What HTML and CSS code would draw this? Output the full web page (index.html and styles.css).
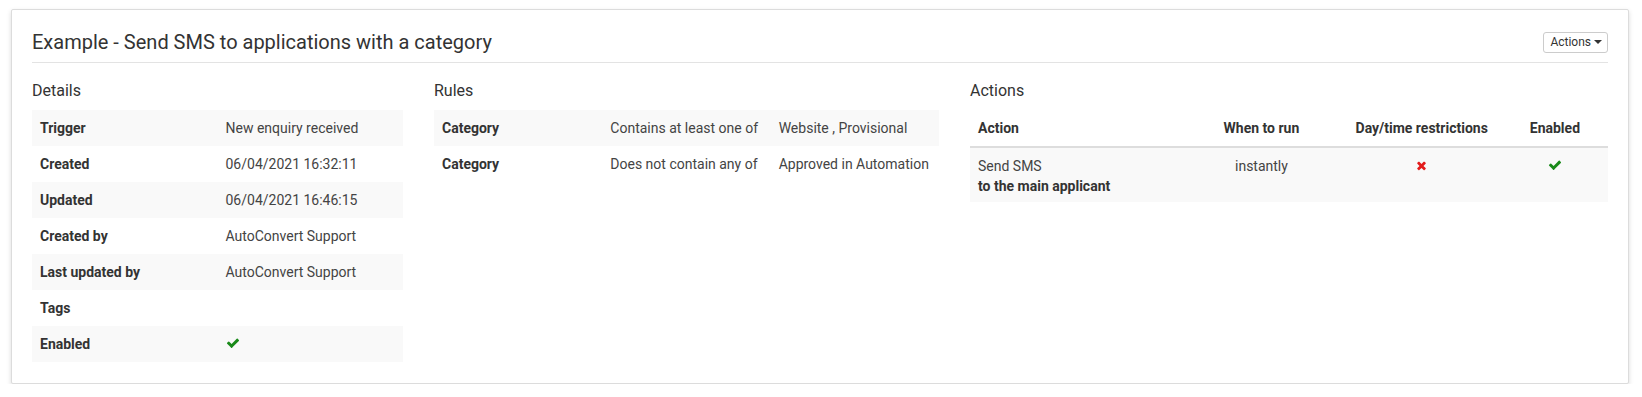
FILE: index.html
```html
<!DOCTYPE html>
<html>
<head>
<meta charset="utf-8">
<link rel="stylesheet" href="styles.css">
</head>
<body>
<div class="card">
  <div class="card-header">
    <h3 class="title">Example - Send SMS to applications with a category</h3>
    <button class="btn-actions">Actions <span class="caret"></span></button>
  </div>
  <div class="cols">
    <section>
      <h4 class="sec-title">Details</h4>
      <table class="tbl striped half">
        <tr><th>Trigger</th><td>New enquiry received</td></tr>
        <tr><th>Created</th><td>06/04/2021 16:32:11</td></tr>
        <tr><th>Updated</th><td>06/04/2021 16:46:15</td></tr>
        <tr><th>Created by</th><td>AutoConvert Support</td></tr>
        <tr><th>Last updated by</th><td>AutoConvert Support</td></tr>
        <tr><th>Tags</th><td></td></tr>
        <tr><th>Enabled</th><td><svg class="ico check" viewBox="0 0 1792 1792"><path d="M1671 566q0 40-28 68l-724 724-136 136q-28 28-68 28t-68-28l-136-136-362-362q-28-28-28-68t28-68l136-136q28-28 68-28t68 28l294 295 656-657q28-28 68-28t68 28l136 136q28 28 28 68z"/></svg></td></tr>
      </table>
    </section>
    <section>
      <h4 class="sec-title">Rules</h4>
      <table class="tbl striped thirds">
        <tr><th>Category</th><td>Contains at least one of</td><td>Website , Provisional</td></tr>
        <tr><th>Category</th><td>Does not contain any of</td><td>Approved in Automation</td></tr>
      </table>
    </section>
    <section>
      <h4 class="sec-title">Actions</h4>
      <table class="tbl actions">
        <thead>
          <tr><th class="c1">Action</th><th class="c2 center">When to run</th><th class="c3 center">Day/time restrictions</th><th class="c4 center">Enabled</th></tr>
        </thead>
        <tbody>
          <tr class="odd">
            <td>Send SMS<br><b>to the main applicant</b></td>
            <td class="center">instantly</td>
            <td class="center"><svg class="ico times" viewBox="0 0 1408 1792"><path d="M1298 1322q0 40-28 68l-136 136q-28 28-68 28t-68-28l-294-294-294 294q-28 28-68 28t-68-28l-136-136q-28-28-28-68t28-68l294-294-294-294q-28-28-28-68t28-68l136-136q28-28 68-28t68 28l294 294 294-294q28-28 68-28t68 28l136 136q28 28 28 68t-28 68l-294 294 294 294q28 28 28 68z"/></svg></td>
            <td class="center"><svg class="ico check" viewBox="0 0 1792 1792"><path d="M1671 566q0 40-28 68l-724 724-136 136q-28 28-68 28t-68-28l-136-136-362-362q-28-28-28-68t28-68l136-136q28-28 68-28t68 28l294 295 656-657q28-28 68-28t68 28l136 136q28 28 28 68z"/></svg></td>
          </tr>
        </tbody>
      </table>
    </section>
  </div>
</div>
</body>
</html>
```
FILE: styles.css
```css
* { box-sizing: border-box; }
html, body { margin: 0; background: #fff; }
body {
  padding: 9px 13px 0 11px;
  font-family: Roboto, "Liberation Sans", sans-serif;
  font-size: 14px;
  line-height: 20px;
  color: #333;
}
.card {
  border: 1px solid #dcdcdc;
  border-radius: 2px;
  box-shadow: 0 2px 5px rgba(0,0,0,0.14);
  padding: 20px 20px 21px 20px;
  background: #fff;
}
.card-header {
  display: flex;
  justify-content: space-between;
  align-items: center;
  padding-bottom: 8px;
  border-bottom: 1px solid #e3e3e3;
}
.title {
  margin: 0;
  font-size: 20px;
  font-weight: 400;
  line-height: 24px;
  color: #333;
}
.btn-actions {
  font-family: Roboto, "Liberation Sans", sans-serif;
  font-size: 12px;
  line-height: 17px;
  color: #333;
  background: #fff;
  border: 1px solid #ccc;
  border-radius: 3px;
  padding: 1px 5px 1px 6px;
  display: flex;
  align-items: center;
  gap: 3px;
  height: 21px;
}
.caret {
  display: inline-block;
  width: 0; height: 0;
  border-top: 4px solid #333;
  border-left: 4px solid transparent;
  border-right: 4px solid transparent;
}
.cols {
  display: grid;
  grid-template-columns: 371px 505px 1fr;
  column-gap: 31px;
  padding-top: 18px;
}
.sec-title {
  margin: 0 0 9px 0;
  font-size: 16px;
  font-weight: 400;
  line-height: 20px;
}
.tbl {
  width: 100%;
  border-collapse: collapse;
  table-layout: fixed;
}
.tbl th, .tbl td {
  padding: 8px;
  text-align: left;
  vertical-align: top;
  line-height: 20px;
}
.tbl td { color: #444; }
.tbl th { font-weight: 700; color: #333; }
.striped tr:nth-child(odd) { background: #f9f9f9; }
.half th, .half td { width: 50%; }
.thirds th, .thirds td { width: 33.333%; }
.actions thead th { border-bottom: 2px solid #ddd; }
.actions .c1 { width: 211px; }
.actions .c2 { width: 160px; }
.actions .c3 { width: 160px; }
.actions .c4 { width: 106px; }
.actions tr.odd { background: #f9f9f9; }
.actions tbody td { padding: 8px 8px 6px 8px; }
.actions b { color: #333; }
.center { text-align: center !important; }
.ico { width: 13px; height: 13px; vertical-align: -1px; }
.ico.check { fill: #1a8a1a; width: 14px; height: 14px; }
.ico.times { fill: #e31b1b; width: 11px; height: 13px; }
```
